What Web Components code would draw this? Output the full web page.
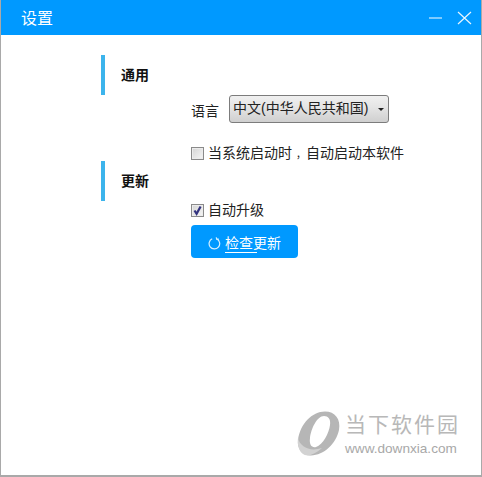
<!DOCTYPE html>
<html lang="zh"><head><meta charset="utf-8"><style>
html,body{margin:0;padding:0;background:#fff}
body{width:482px;height:477px;overflow:hidden;font-family:"Liberation Sans","Noto Sans CJK SC",sans-serif}
</style></head><body>
<settings-window>
  <section-head slot="body" style="height:40px;padding-bottom:0">通用</section-head>
  <form-row slot="body" style="height:28px">
    <span style="width:38px;font-size:14px;line-height:16px;padding-top:3px;color:#222">语言</span>
    <lang-select>中文(中华人民共和国)</lang-select>
  </form-row>
  <form-row slot="body" style="height:38px;align-items:flex-end">
    <check-item>当系统启动时<span style="font-size:10px;line-height:1;padding-left:4px">，</span>自动启动本软件</check-item>
  </form-row>
  <section-head slot="body" style="height:40px;padding-bottom:1px">更新</section-head>
  <form-row slot="body" style="height:24px;align-items:flex-start;padding-top:1px">
    <check-item checked>自动升级</check-item>
  </form-row>
  <form-row slot="body"><update-button>检查更新</update-button></form-row>
  <brand-mark slot="over"></brand-mark>
</settings-window>
<script>
function def(name,html){customElements.define(name,class extends HTMLElement{
  constructor(){super();this.attachShadow({mode:"open"}).innerHTML=typeof html==="function"?html(this):html}
})}
def("settings-window",`<style>
:host{display:flex;flex-direction:column;position:relative;box-sizing:border-box;width:482px;height:477px;border:solid #a9a9a9;border-width:0 1px 2px 1px;background:#fff;color:#111}
header{flex:none;height:35px;background:#0099ff;display:flex;align-items:center;color:#fff;font-size:16px;padding:0 8px 0 20px}
.t{flex:1;padding-bottom:2px}
svg{display:block}
main{flex:1;padding-top:20px;display:flex;flex-direction:column}
</style><header><span class="t">设置</span>
<svg width="46" height="14" viewBox="0 0 46 14" fill="none" stroke-width="1.2"><path d="M2 7H15" stroke="#9fd8ff" stroke-width="1.6"/><path d="M31 1L44 13M44 1L31 13" stroke="#e8f6ff"/></svg>
</header><main><slot name="body"></slot></main><slot name="over"></slot>`);
def("section-head",`<style>
:host{display:flex;align-items:center;box-sizing:border-box;margin-left:100px;border-left:4px solid #3cb4ec;padding-left:16px;font-size:14px;line-height:16px;font-weight:700;color:#111;flex:none}
</style><slot></slot>`);
def("form-row",`<style>:host{display:flex;align-items:center;box-sizing:border-box;margin-left:190px;flex:none}</style><slot></slot>`);
def("lang-select",`<style>
:host{display:flex;align-items:center;justify-content:space-between;box-sizing:border-box;width:160px;height:28px;border:1px solid #7c7c7c;border-radius:3px;background:linear-gradient(#f0f0f0,#e4e4e4 45%,#cfcfcf);padding:0 4px 3px 3px;font-size:14px;line-height:16px;color:#222;white-space:nowrap}
i{width:0;height:0;border:3.5px solid transparent;border-top-color:#222;border-bottom:0;margin-top:4px}
</style><span><slot></slot></span><i></i>`);
def("check-item",el=>`<style>
:host{display:flex;align-items:center;gap:4px;font-size:14px;line-height:16px;color:#222;white-space:nowrap}
b{display:block;box-sizing:border-box;width:13px;height:13px;border:1px solid #8a8a8a;background:linear-gradient(135deg,#d4d4d4,#f6f6f6);box-shadow:inset 0 0 0 1px #ececec;flex:none}
svg{display:block}
</style><b>${el.hasAttribute("checked")?'<svg width="11" height="11" viewBox="0 0 11 11"><path d="M2.5 5.5L4.6 8.8L8.6 1.5" fill="none" stroke="#33337f" stroke-width="2.2"/></svg>':''}</b><span><slot></slot></span>`);
def("update-button",`<style>
:host{display:flex;align-items:center;justify-content:center;gap:4px;width:107px;height:33px;background:#0099ff;border-radius:4px;color:#fff;font-size:14px;line-height:18px;box-sizing:border-box;white-space:nowrap;padding-top:3px}
svg{display:block}
span{background:linear-gradient(#fff,#fff) left bottom/32px 1px no-repeat;padding-bottom:1px}
</style><svg width="13" height="13" viewBox="0 0 13 13" fill="none" stroke="#d8f0ff" stroke-width="1.2"><path d="M4.2 1.8A5.3 5.3 0 1 0 9 2"/><path d="M8.2 0.4L8.8 2.3L10.9 2.2"/></svg><span><slot></slot></span>`);
def("brand-mark",`<style>
:host{position:absolute;left:296px;top:411px;width:170px;height:50px;color:#b0b0b0}
svg{position:absolute;left:0;top:0}
.a{position:absolute;left:48px;top:1px;font-size:21px;letter-spacing:2px;line-height:25px;white-space:nowrap;color:#b8b8b8}
.b{position:absolute;left:48px;top:30px;font-size:13.6px;line-height:15px;white-space:nowrap;color:#a8a8a8}
</style>
<svg width="44" height="46" viewBox="0 0 44 46"><path d="M28 0.5C38 0.5 44 8 42 19C39 33 27 44 14 44.500C5 45 0 37 1 29C3 13 15 0.5 28 0.5ZM27 5C20 5 14 18 13 27C12 34 15 37 19 36C26 34 32 22 33 14C34 8 31 5 27 5Z" fill="#b6b6b6"/><path d="M1 27C3 36 13 41 25 37C17 44 10 46 6 43C2 40 0 34 1 27Z" fill="#d2d2d2"/></svg>
<div class="a">当下软件园</div><div class="b">www.downxia.com</div>`);
</script>
</body></html>
